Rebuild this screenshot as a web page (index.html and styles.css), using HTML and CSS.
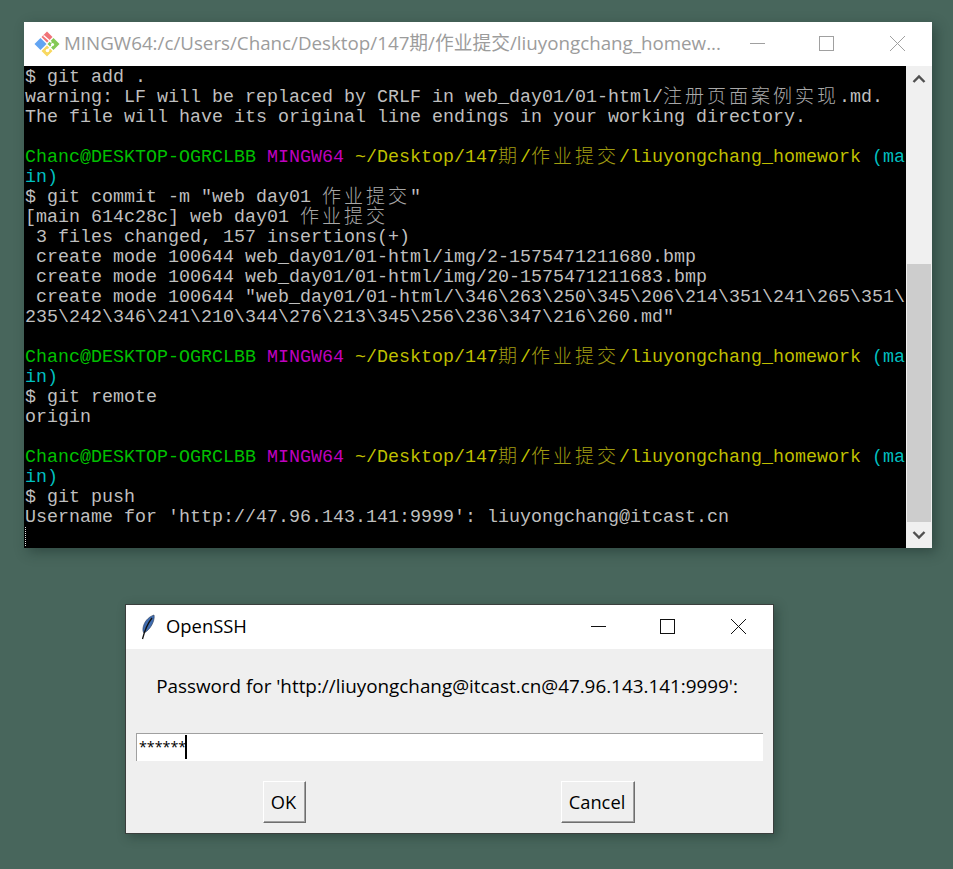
FILE: index.html
```html
<!DOCTYPE html>
<html lang="zh">
<head>
<meta charset="utf-8">
<title>MINGW64</title>
<link rel="stylesheet" href="styles.css">
</head>
<body>
<div class="desk">
  <section class="term-win">
    <header class="term-title">
      <svg class="git-logo" width="26" height="26" viewBox="0 0 26 26">
        <polygon points="13,0.500 18.500,6 13,11.500 7.500,6" fill="#f07378"/>
        <polygon points="19.500,7 25.500,13 19.500,19 13.500,13" fill="#84c956"/>
        <polygon points="13,14.500 18.500,20 13,25.500 7.500,20" fill="#f8d860"/>
        <polygon points="6.500,7 12.500,13 6.500,19 0.500,13" fill="#62a4f2"/>
        <path d="M9.500 4.500L17.500 11.500M18 14.500L14 19" stroke="#fff" stroke-width="1.500"/>
        <circle cx="13.500" cy="19.500" r="1.800" fill="#fff"/>
        <circle cx="18.500" cy="13.500" r="1.600" fill="#fff"/>
      </svg>
      <span class="term-name">MINGW64:/c/Users/Chanc/Desktop/147期/作业提交/liuyongchang_homew...</span>
      <div class="caps">
        <svg class="cap-a" viewBox="0 0 69 44"><path d="M0 21.500H15" stroke="#a0a0a0"/></svg>
        <svg class="cap-b" viewBox="0 0 71 44"><rect x="0.500" y="14.500" width="14" height="14" fill="none" stroke="#a0a0a0"/></svg>
        <svg class="cap-c" viewBox="0 0 42 44"><path d="M0 14L15 29M15 14L0 29" stroke="#a0a0a0"/></svg>
      </div>
    </header>
    <div class="term-body">
      <pre class="screen"><div>$ git add .</div><div>warning: LF will be replaced by CRLF in web_day01/01-html/<span class="cjk">注册页面案例实现</span>.md.</div><div>The file will have its original line endings in your working directory.</div><div> </div><div><span class="g">Chanc@DESKTOP-OGRCLBB</span> <span class="m">MINGW64</span> <span class="y">~/Desktop/147<span class="cjk">期</span>/<span class="cjk">作业提交</span>/liuyongchang_homework</span> <span class="c">(ma</span></div><div><span class="c">in)</span></div><div>$ git commit -m "web day01 <span class="cjk">作业提交</span>"</div><div>[main 614c28c] web day01 <span class="cjk">作业提交</span></div><div> 3 files changed, 157 insertions(+)</div><div> create mode 100644 web_day01/01-html/img/2-1575471211680.bmp</div><div> create mode 100644 web_day01/01-html/img/20-1575471211683.bmp</div><div> create mode 100644 "web_day01/01-html/\346\263\250\345\206\214\351\241\265\351\</div><div>235\242\346\241\210\344\276\213\345\256\236\347\216\260.md"</div><div> </div><div><span class="g">Chanc@DESKTOP-OGRCLBB</span> <span class="m">MINGW64</span> <span class="y">~/Desktop/147<span class="cjk">期</span>/<span class="cjk">作业提交</span>/liuyongchang_homework</span> <span class="c">(ma</span></div><div><span class="c">in)</span></div><div>$ git remote</div><div>origin</div><div> </div><div><span class="g">Chanc@DESKTOP-OGRCLBB</span> <span class="m">MINGW64</span> <span class="y">~/Desktop/147<span class="cjk">期</span>/<span class="cjk">作业提交</span>/liuyongchang_homework</span> <span class="c">(ma</span></div><div><span class="c">in)</span></div><div>$ git push</div><div>Username for 'http://47.96.143.141:9999': liuyongchang@itcast.cn</div><div><span class="cursor"></span></div></pre>
      <div class="scrollbar">
        <div class="arrow">
          <svg width="14" height="10" viewBox="0 0 14 10"><path d="M1.500 8L7 2.500L12.500 8" fill="none" stroke="#505050" stroke-width="2.400"/></svg>
        </div>
        <div class="track"><div class="thumb"></div></div>
        <div class="arrow">
          <svg width="14" height="10" viewBox="0 0 14 10"><path d="M1.500 2L7 7.500L12.500 2" fill="none" stroke="#505050" stroke-width="2.400"/></svg>
        </div>
      </div>
    </div>
  </section>

  <section class="dialog">
    <header class="dlg-title">
      <svg class="feather" width="18" height="26" viewBox="0 0 18 26">
        <path d="M15 1C9 3 5 8 4 14C3.700 16 4 18 5 19C9 17 13 12 14.500 7C15 5 15.500 3 15 1Z" fill="#3f6cb0" stroke="#2b3a55" stroke-width=".6"/>
        <path d="M13 4C9 9 6 15 3.500 25" stroke="#111" stroke-width="1.300" fill="none"/>
      </svg>
      <span class="dlg-name">OpenSSH</span>
      <div class="caps">
        <svg class="cap-a" viewBox="0 0 69 44"><path d="M0 21.500H15" stroke="#111"/></svg>
        <svg class="cap-b" viewBox="0 0 71 44"><rect x="0.500" y="14.500" width="14" height="14" fill="none" stroke="#111"/></svg>
        <svg class="cap-c" viewBox="0 0 42 44"><path d="M0 14L15 29M15 14L0 29" stroke="#111"/></svg>
      </div>
    </header>
    <div class="dlg-body">
      <p class="prompt">Password for 'http://liuyongchang@itcast.cn@47.96.143.141:9999':</p>
      <div class="entry"><span class="stars">******</span><span class="caret"></span></div>
      <div class="buttons">
        <button class="btn btn-ok">OK</button>
        <button class="btn btn-cancel">Cancel</button>
      </div>
    </div>
  </section>
</div>
</body>
</html>
```

FILE: styles.css
```css
html, body {
  margin: 0;
  padding: 0;
  background: #48665c;
}
.desk {
  width: 953px;
  height: 869px;
  padding: 22px 0 0 24px;
  box-sizing: border-box;
  overflow: hidden;
}
.term-win {
  width: 908px;
  height: 526px;
  display: flex;
  flex-direction: column;
  box-shadow: 4px 4px 12px rgba(20, 40, 35, .45);
}
.term-title {
  height: 44px;
  flex: none;
  background: #fff;
  display: flex;
  align-items: center;
  padding-left: 10px;
}
.git-logo { flex: none; margin-right: 4px; }
.term-name {
  font: 18.75px/22px "Open Sans", "Noto Sans CJK SC", sans-serif;
  color: #9c9c9c;
  white-space: nowrap;
  flex: 1;
  padding-bottom: 3px;
}
.caps { display: flex; flex: none; }
.caps svg { height: 44px; display: block; }
.cap-a { width: 69px; }
.cap-b { width: 71px; }
.cap-c { width: 42px; }
.term-body {
  flex: 1;
  display: flex;
  min-height: 0;
  background: #000;
}
.screen {
  margin: 0;
  flex: 1;
  min-width: 0;
  overflow: hidden;
  padding: 2px 0 0 1px;
  font: 18.33px/20px "Liberation Mono", "Noto Sans CJK SC", monospace;
  color: #bfbfbf;
}
.screen > div { height: 20px; white-space: pre; }
.cjk {
  font-family: "Noto Sans CJK SC", sans-serif;
  font-size: 19px;
  font-weight: 300;
  letter-spacing: 3px;
  color: #a8a8a8;
  line-height: 0;
  vertical-align: -1px;
}
.y .cjk { color: #a09c10; }
.g { color: #00bf00; }
.m { color: #bf00bf; }
.y { color: #bfbf00; }
.c { color: #00bfbf; }
.cursor {
  display: block;
  width: 0;
  height: 19px;
  border-left: 1px dotted #e0e0e0;
  margin-top: -1px;
}
.scrollbar {
  width: 26px;
  flex: none;
  background: #f0f0f0;
  display: flex;
  flex-direction: column;
}
.arrow {
  height: 26px;
  flex: none;
  display: flex;
  align-items: center;
  justify-content: center;
}
.track {
  flex: 1;
  display: flex;
  flex-direction: column;
  justify-content: flex-end;
}
.thumb {
  height: 258px;
  margin: 0 1px;
  background: #cdcdcd;
}
.dialog {
  width: 649px;
  height: 230px;
  margin: 56px 0 0 101px;
  box-sizing: border-box;
  border: 1px solid #3a3f3d;
  display: flex;
  flex-direction: column;
  box-shadow: 3px 3px 10px rgba(20, 40, 35, .4);
}
.dlg-title {
  height: 44px;
  flex: none;
  background: #fff;
  display: flex;
  align-items: center;
  padding-left: 13px;
}
.feather { flex: none; margin-right: 9px; }
.dlg-name {
  font: 18.4px/22px "Open Sans", sans-serif;
  color: #000;
  flex: 1;
  padding-bottom: 3px;
}
.dlg-body {
  flex: 1;
  background: #efefef;
  padding: 0 10px;
}
.prompt {
  margin: 24px 0 0;
  padding-right: 5px;
  text-align: center;
  font: 18.85px/26px "Open Sans", sans-serif;
  color: #000;
  white-space: nowrap;
}
.entry {
  margin: 34px 0 0;
  height: 28px;
  box-sizing: border-box;
  width: 627px;
  background: #fff;
  border-top: 1px solid #a0a0a0;
  border-left: 1px solid #a0a0a0;
  display: flex;
  align-items: flex-start;
  font: 14.3px/26px "Open Sans", sans-serif;
}
.stars { padding-left: 2px; color: #000; width: 46px; }
.caret { width: 2px; height: 24px; background: #000; margin-top: 1px; }
.buttons {
  display: flex;
  margin-top: 20px;
  padding-left: 127px;
}
.btn {
  height: 42px;
  box-sizing: border-box;
  background: #efefef;
  border: 1px solid;
  border-color: #fff #6e6e6e #6e6e6e #fff;
  box-shadow: inset -1px -1px 0 #a0a0a0;
  font: 18.3px "Open Sans", sans-serif;
  color: #000;
  padding: 0 2px 2px 0;
}
.btn-ok { width: 43px; margin-right: 255px; }
.btn-cancel { width: 74px; }
```
